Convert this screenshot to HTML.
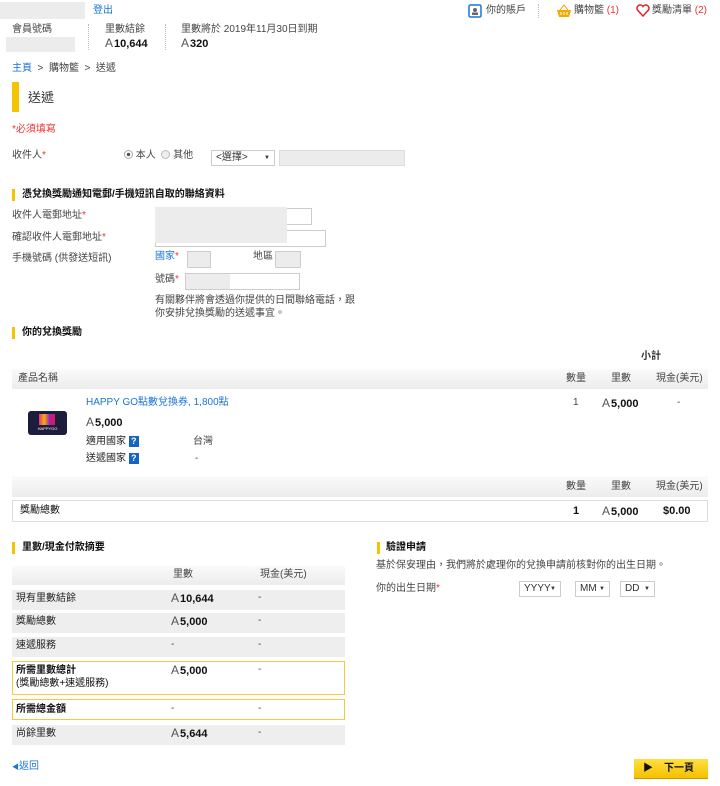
<!DOCTYPE html>
<html><head><meta charset="utf-8">
<style>
*{margin:0;padding:0;box-sizing:border-box}
body{width:720px;height:786px;background:#fff;font-family:"Liberation Sans","Noto Sans CJK TC",sans-serif;font-size:10px;color:#444;position:relative;overflow:hidden}
.a{position:absolute;white-space:nowrap;line-height:12px}
.b{font-weight:bold;color:#111}
.m{font-weight:normal;color:#555;font-size:12px;margin-right:1px}
.blue{color:#1a73d9}
.red{color:#e33}
.g{position:absolute;background:#ececec}
.in{position:absolute;border:1px solid #ccc;background:#fff}
.bar{position:absolute;width:3px;background:#f5c400}
.sel{position:absolute;border:1px solid #ccc;background:#fff;font-size:10px;line-height:14px;padding-left:4px;color:#333}
.sel:after{content:"▼";position:absolute;right:4px;font-size:6px;top:0}
.hdr{position:absolute;background:linear-gradient(#fafafa,#ececec)}
.row{position:absolute;left:12px;width:333px;background:#eeeeee}
.hl{position:absolute;left:12px;width:333px;border:1px solid #f5c842;background:#fff}
.q{display:inline-block;width:10px;height:11px;background:#1565c0;color:#fff;font-weight:bold;font-size:9px;text-align:center;line-height:11px;vertical-align:middle}
.dot{position:absolute;border-left:1px dotted #bbb}
</style></head><body>
<div class="g" style="left:0;top:2px;width:85px;height:17px"></div>
<div class="a blue" style="left:93px;top:5px">登出</div>
<div class="a" style="left:12px;top:24px">會員號碼</div>
<div class="g" style="left:6px;top:37px;width:69px;height:15px"></div>
<div class="dot" style="left:88px;top:24px;height:26px"></div>
<div class="a" style="left:105px;top:24px">里數結餘</div>
<div class="a b" style="left:105px;top:37px;font-size:11px"><span class="m">A</span>10,644</div>
<div class="dot" style="left:165px;top:24px;height:26px"></div>
<div class="a" style="left:181px;top:24px">里數將於 2019年11月30日到期</div>
<div class="a b" style="left:181px;top:37px;font-size:11px"><span class="m">A</span>320</div>

<svg class="a" style="left:468px;top:4px" width="14" height="14"><rect x="1" y="1" width="12" height="12" rx="1.5" fill="none" stroke="#1a73d9" stroke-width="1.5"/><circle cx="7" cy="6" r="2" fill="#666"/><rect x="4" y="8.5" width="6" height="2.5" fill="#666"/></svg>
<div class="a" style="left:486px;top:5px">你的賬戶</div>
<div class="dot" style="left:538px;top:4px;height:14px"></div>
<svg class="a" style="left:556px;top:4px" width="16" height="14"><path d="M4 6 L8 1 L12 6" fill="none" stroke="#f0a000" stroke-width="1"/><path d="M1 6 H15 L13 13 H3 Z" fill="#f5a800"/><path d="M5 8v3M8 8v3M11 8v3" stroke="#fff" stroke-width="1"/></svg>
<div class="a" style="left:574px;top:5px">購物籃 <span class="red">(1)</span></div>
<svg class="a" style="left:636px;top:4px" width="14" height="13"><path d="M7 12 L1.5 6 A3 3 0 0 1 7 2.5 A3 3 0 0 1 12.5 6 Z" fill="none" stroke="#d9262e" stroke-width="1.5"/></svg>
<div class="a" style="left:652px;top:5px">獎勵清單 <span class="red">(2)</span></div>

<div class="a" style="left:12px;top:63px"><span class="blue">主頁</span> &nbsp;&gt;&nbsp; 購物籃 &nbsp;&gt;&nbsp; 送遞</div>
<div class="bar" style="left:12px;top:82px;width:7px;height:30px"></div>
<div class="a" style="left:28px;top:90px;font-size:13px;line-height:16px;color:#333">送遞</div>
<div class="a red" style="left:12px;top:124px">*必須填寫</div>

<div class="a" style="left:12px;top:150px">收件人<span class="red">*</span></div>
<div class="a" style="left:124px;top:150px"><span style="display:inline-block;width:9px;height:9px;border:1px solid #aaa;border-radius:50%;background:radial-gradient(#555 30%,#fff 40%);vertical-align:-1px"></span> 本人 &nbsp;<span style="display:inline-block;width:9px;height:9px;border:1px solid #bbb;border-radius:50%;background:#eee;vertical-align:-1px"></span> 其他</div>
<div class="sel" style="left:211px;top:150px;width:64px;height:16px">&lt;選擇&gt;</div>
<div class="g" style="left:279px;top:150px;width:126px;height:16px;border:1px solid #ddd"></div>

<div class="bar" style="left:12px;top:189px;height:12px"></div>
<div class="a b" style="left:22px;top:189px">憑兌換獎勵通知電郵/手機短訊自取的聯絡資料</div>
<div class="a" style="left:12px;top:210px">收件人電郵地址<span class="red">*</span></div>
<div class="in" style="left:155px;top:208px;width:157px;height:17px"></div>
<div class="a" style="left:12px;top:232px">確認收件人電郵地址<span class="red">*</span></div>
<div class="in" style="left:155px;top:230px;width:171px;height:17px"></div>
<div class="g" style="left:155px;top:207px;width:132px;height:36px"></div>
<div class="a" style="left:12px;top:253px">手機號碼 (供發送短訊)</div>
<div class="a blue" style="left:155px;top:251px">國家<span class="red">*</span></div>
<div class="in" style="left:187px;top:251px;width:24px;height:17px;background:#ececec"></div>
<div class="a" style="left:253px;top:251px">地區</div>
<div class="in" style="left:275px;top:251px;width:26px;height:17px;background:#ececec"></div>
<div class="a" style="left:155px;top:274px">號碼<span class="red">*</span></div>
<div class="in" style="left:185px;top:273px;width:115px;height:17px"></div>
<div class="g" style="left:186px;top:274px;width:44px;height:15px"></div>
<div class="a" style="left:155px;top:294px;line-height:13px">有關夥伴將會透過你提供的日間聯絡電話，跟<br>你安排兌換獎勵的送遞事宜。</div>

<div class="bar" style="left:12px;top:327px;height:12px"></div>
<div class="a b" style="left:22px;top:327px">你的兌換獎勵</div>
<div class="a b" style="left:641px;top:351px;color:#333">小計</div>
<div class="hdr" style="left:12px;top:369px;width:696px;height:20px"></div>
<div class="a" style="left:18px;top:373px">產品名稱</div>
<div class="a" style="left:566px;top:373px">數量</div>
<div class="a" style="left:611px;top:373px">里數</div>
<div class="a" style="left:656px;top:373px">現金(美元)</div>

<div class="a" style="left:28px;top:411px;width:39px;height:24px;background:#1c1c3c;border-radius:3px;overflow:hidden">
<div style="position:absolute;left:11px;top:3px;width:16px;height:11px;background:linear-gradient(90deg,#e8308a,#f6b000,#a020c0,#e02030)"></div>
<div style="position:absolute;left:0;width:39px;top:15px;font-size:4px;color:#fff;text-align:center;line-height:5px">HAPPYGO</div></div>
<div class="a blue" style="left:86px;top:397px">HAPPY GO點數兌換券, 1,800點</div>
<div class="a b" style="left:86px;top:416px;font-size:11px"><span class="m">A</span>5,000</div>
<div class="a" style="left:86px;top:436px;color:#222">適用國家 <span class="q">?</span></div>
<div class="a" style="left:193px;top:436px">台灣</div>
<div class="a" style="left:86px;top:453px;color:#222">送遞國家 <span class="q">?</span></div>
<div class="a" style="left:195px;top:453px">-</div>
<div class="a" style="left:573px;top:397px">1</div>
<div class="a b" style="left:602px;top:397px;font-size:11px"><span class="m">A</span>5,000</div>
<div class="a" style="left:677px;top:397px">-</div>
<div class="hdr" style="left:12px;top:476px;width:696px;height:21px"></div>
<div class="a" style="left:566px;top:481px">數量</div>
<div class="a" style="left:611px;top:481px">里數</div>
<div class="a" style="left:656px;top:481px">現金(美元)</div>
<div style="position:absolute;left:12px;top:500px;width:696px;height:22px;border:1px solid #ddd"></div>
<div class="a" style="left:20px;top:505px;color:#111">獎勵總數</div>
<div class="a b" style="left:573px;top:505px;font-size:11px">1</div>
<div class="a b" style="left:602px;top:505px;font-size:11px"><span class="m">A</span>5,000</div>
<div class="a b" style="left:663px;top:505px;font-size:11px">$0.00</div>

<div class="bar" style="left:12px;top:542px;height:12px"></div>
<div class="a b" style="left:22px;top:542px">里數/現金付款摘要</div>
<div class="hdr" style="left:12px;top:566px;width:333px;height:19px"></div>
<div class="a" style="left:173px;top:569px">里數</div>
<div class="a" style="left:260px;top:569px">現金(美元)</div>
<div class="row" style="top:590px;height:20px"></div>
<div class="a" style="left:16px;top:593px;color:#222">現有里數結餘</div>
<div class="a b" style="left:171px;top:592px;font-size:11px"><span class="m">A</span>10,644</div>
<div class="a" style="left:258px;top:592px">-</div>
<div class="row" style="top:613px;height:20px"></div>
<div class="a" style="left:16px;top:616px;color:#222">獎勵總數</div>
<div class="a b" style="left:171px;top:615px;font-size:11px"><span class="m">A</span>5,000</div>
<div class="a" style="left:258px;top:615px">-</div>
<div class="row" style="top:637px;height:20px"></div>
<div class="a" style="left:16px;top:640px;color:#222">速遞服務</div>
<div class="a" style="left:171px;top:639px">-</div>
<div class="a" style="left:258px;top:639px">-</div>
<div class="hl" style="top:661px;height:34px"></div>
<div class="a" style="left:16px;top:664px;color:#111;line-height:13px"><b>所需里數總計</b><br>(獎勵總數+速遞服務)</div>
<div class="a b" style="left:171px;top:664px;font-size:11px"><span class="m">A</span>5,000</div>
<div class="a" style="left:258px;top:664px">-</div>
<div class="hl" style="top:699px;height:21px"></div>
<div class="a b" style="left:16px;top:704px">所需總金額</div>
<div class="a" style="left:171px;top:703px">-</div>
<div class="a" style="left:258px;top:703px">-</div>
<div class="row" style="top:725px;height:20px"></div>
<div class="a" style="left:16px;top:728px;color:#222">尚餘里數</div>
<div class="a b" style="left:171px;top:727px;font-size:11px"><span class="m">A</span>5,644</div>
<div class="a" style="left:258px;top:727px">-</div>

<div class="bar" style="left:377px;top:542px;height:12px"></div>
<div class="a b" style="left:386px;top:542px">驗證申請</div>
<div class="a" style="left:376px;top:560px">基於保安理由，我們將於處理你的兌換申請前核對你的出生日期。</div>
<div class="a" style="left:376px;top:583px">你的出生日期<span class="red">*</span></div>
<div class="sel" style="left:519px;top:581px;width:42px;height:16px">YYYY</div>
<div class="sel" style="left:575px;top:581px;width:35px;height:16px">MM</div>
<div class="sel" style="left:620px;top:581px;width:35px;height:16px">DD</div>

<div class="a blue" style="left:12px;top:761px"><span style="font-size:7px">◀</span>返回</div>
<div style="position:absolute;left:634px;top:759px;width:74px;height:20px;background:linear-gradient(#ffe040,#f5c000);border-bottom:1px solid #c99a00"></div>
<div class="a b" style="left:643px;top:763px"><span style="font-size:10px">▶</span></div>
<div class="a b" style="left:664px;top:763px">下一頁</div>
</body></html>
